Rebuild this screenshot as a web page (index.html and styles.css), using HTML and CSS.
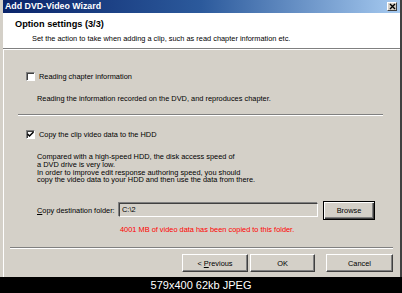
FILE: index.html
```html
<!DOCTYPE html>
<html lang="en">
<head>
    <meta charset="UTF-8">
    <title>Add DVD-Video Wizard</title>
    <link rel="stylesheet" href="styles.css">
</head>
<body>

<div class="window">
    <div class="titlebar">
        <span class="title-text">Add DVD-Video Wizard</span>
        <span class="close-btn">
            <svg width="7" height="7" viewBox="0 0 7 7"><path d="M1 1 L6 6 M6 1 L1 6" stroke="#000" stroke-width="1.4"/></svg>
        </span>
    </div>

    <div class="header">
        <div class="header-title">Option settings (3/3)</div>
        <div class="header-sub">Set the action to take when adding a clip, such as read chapter information etc.</div>
    </div>

    <div class="content">
        <div class="check-row first-row">
            <span class="checkbox"></span>
            <span>Reading chapter information</span>
        </div>
        <div class="desc">Reading the information recorded on the DVD, and reproduces chapter.</div>

        <div class="group-line"></div>

        <div class="check-row second-row">
            <span class="checkbox">
                <svg width="7" height="7" viewBox="0 0 7 7"><path d="M0.5 3 L2.5 5 L6.5 1" fill="none" stroke="#000" stroke-width="1.5"/></svg>
            </span>
            <span>Copy the clip video data to the HDD</span>
        </div>
        <div class="para">
            Compared with a high-speed HDD, the disk access speed of<br>
            a DVD drive is very low.<br>
            In order to improve edit response authoring speed, you should<br>
            copy the video data to your HDD and then use the data from there.
        </div>

        <div class="folder-row">
            <span class="folder-label"><u>C</u>opy destination folder:</span>
            <span class="folder-input">C:\2</span>
            <span class="btn default-btn">Browse</span>
        </div>
        <div class="notice">4001 MB of video data has been copied to this folder.</div>
    </div>

    <div class="footer">
        <div class="footer-line"></div>
        <div class="buttons">
            <span class="btn btn-prev"><span>&lt; <u>P</u>revious</span></span>
            <span class="btn btn-ok">OK</span>
            <span class="btn btn-cancel">Cancel</span>
        </div>
    </div>
</div>

<div class="caption">579x400 62kb JPEG</div>

</body>
</html>
```

FILE: styles.css
```css
body {
    margin: 0;
    padding: 0;
    background-color: #000;
    font-family: 'Liberation Sans', Arial, sans-serif;
    font-size: 7.4px;
    color: #000;
}
.window {
    width: 402px;
    height: 277px;
    box-sizing: border-box;
    background-color: #d4d0c8;
    border-left: 3px solid #d4d0c8;
    border-right: 2px solid #404040;
    box-shadow: inset 1px 0 0 #fff;
    display: flex;
    flex-direction: column;
}
.titlebar {
    height: 13px;
    display: flex;
    align-items: center;
    justify-content: space-between;
    padding: 0 3px 0 2px;
    background: linear-gradient(to right, #0a246a, #2c5a9c 50%, #a6caf0);
}
.title-text {
    color: #fff;
    font-weight: bold;
    font-size: 8.8px;
    line-height: 13px;
}
.close-btn {
    width: 10px;
    height: 9px;
    box-sizing: border-box;
    background-color: #d4d0c8;
    border: 1px solid;
    border-color: #fff #404040 #404040 #fff;
    display: flex;
    align-items: center;
    justify-content: center;
}
.header {
    height: 35px;
    background-color: #fff;
    border-bottom: 1px solid #808080;
    box-shadow: 0 1px 0 #fff;
    margin-bottom: 1px;
}
.header-title {
    font-weight: bold;
    font-size: 9.2px;
    line-height: 10px;
    padding: 6px 0 0 12px;
}
.header-sub {
    line-height: 9px;
    margin-top: 4.5px;
    padding-left: 29px;
}
.content {
    padding-left: 23px;
}
.check-row {
    display: flex;
    align-items: center;
    gap: 4px;
    height: 9px;
    line-height: 9px;
}
.first-row {
    margin-top: 22px;
}
.second-row {
    margin-top: 14px;
}
.checkbox {
    width: 9px;
    height: 9px;
    box-sizing: border-box;
    background-color: #fff;
    border: 1px solid;
    border-color: #808080 #fff #fff #808080;
    box-shadow: inset 1px 1px 0 #404040;
    display: flex;
    align-items: center;
    justify-content: center;
}
.desc {
    line-height: 9px;
    margin-top: 12.5px;
    padding-left: 11px;
}
.group-line {
    width: 365px;
    height: 1px;
    background-color: #808080;
    border-bottom: 1px solid #fff;
    margin: 11.5px 0 0 -8px;
}
.para {
    line-height: 7.8px;
    margin-top: 14px;
    padding-left: 11px;
}
.folder-row {
    display: flex;
    align-items: center;
    height: 19px;
    margin-top: 16.8px;
    padding-left: 11px;
}
.folder-label {
    width: 82px;
}
.folder-input {
    width: 199px;
    height: 14px;
    box-sizing: border-box;
    line-height: 12px;
    padding-left: 2px;
    border: 1px solid;
    border-color: #404040 #fff #fff #404040;
    box-shadow: -1px -1px 0 #808080;
    margin-right: 5px;
}
.btn {
    box-sizing: border-box;
    height: 18px;
    display: flex;
    align-items: center;
    justify-content: center;
    background-color: #d4d0c8;
    border: 1px solid;
    border-color: #fff #404040 #404040 #fff;
    box-shadow: inset -1px -1px 0 #808080;
}
.default-btn {
    width: 52px;
    height: 19px;
    border-color: #000;
    box-shadow: inset 1px 1px 0 #fff, inset -1px -1px 0 #404040, inset -2px -2px 0 #808080;
}
.notice {
    color: #f00;
    line-height: 9px;
    margin-top: 5.5px;
    padding-left: 94px;
}
.footer {
    margin-top: auto;
    padding: 0 7px 5px 7px;
}
.footer-line {
    height: 1px;
    background-color: #808080;
    border-bottom: 1px solid #fff;
}
.buttons {
    display: flex;
    justify-content: flex-end;
    margin-top: 5px;
}
.btn-prev {
    width: 66px;
}
.btn-ok {
    width: 65px;
    margin-left: 2px;
}
.btn-cancel {
    width: 67px;
    margin-left: 11px;
}
.caption {
    height: 16px;
    line-height: 16px;
    color: #fff;
    font-size: 11px;
    text-align: center;
}
```
